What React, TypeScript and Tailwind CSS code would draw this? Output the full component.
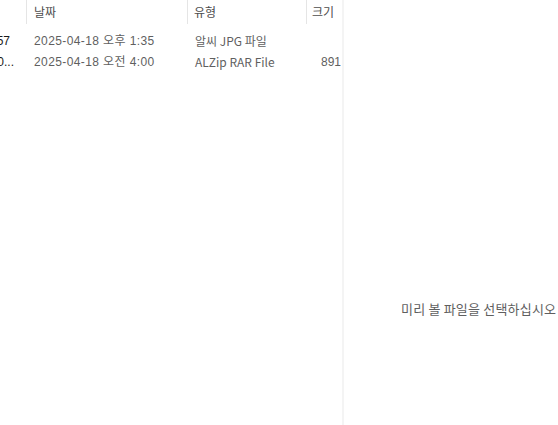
const rows = [
  { name: '57', namePad: 'pr-[17px]', date: '2025-04-18 오후 1:35', type: '알씨 JPG 파일', size: '' },
  { name: '0...', namePad: 'pr-[13px]', date: '2025-04-18 오전 4:00', type: 'ALZip RAR File', size: '891' },
]

const wide = { fontFamily: '"Liberation Sans", "Noto Sans CJK KR", sans-serif' }

export default function App() {
  return (
    <div
      className="w-[558px] h-[425px] bg-white flex overflow-hidden text-[12px]"
      style={{ fontFamily: '"Noto Sans CJK KR", "Noto Sans", sans-serif' }}
    >
      {/* File list */}
      <div className="w-[342px] shrink-0 flex flex-col">
        <div className="flex h-[24px] text-[#4d4d4d]">
          <div className="w-[27px] border-r border-[#e5e5e5]" />
          <div className="w-[161px] pl-[7px] pt-[3px] border-r border-[#e5e5e5]">날짜</div>
          <div className="w-[119px] pl-[6px] pt-[3px] border-r border-[#e5e5e5]">유형</div>
          <div className="flex-1 pl-[5px] pt-[3px]">크기</div>
        </div>
        <div className="pt-[6px]">
          {rows.map((r) => (
            <div key={r.date} className="flex h-[21px] items-center">
              <div
                className={`w-[27px] overflow-hidden flex justify-end text-[#1a1a1a] ${r.namePad}`}
                style={wide}
              >
                <span className="whitespace-nowrap">{r.name}</span>
              </div>
              <div className="w-[161px] pl-[7px] text-[#5f5f5f] whitespace-nowrap tracking-[0.4px]" style={wide}>
                {r.date}
              </div>
              <div className="w-[119px] pl-[7px] text-[#5f5f5f] whitespace-nowrap">{r.type}</div>
              <div className="flex-1 text-right pr-[1px] text-[#5f5f5f]" style={wide}>
                {r.size}
              </div>
            </div>
          ))}
        </div>
      </div>
      <div className="w-[2px] bg-[#f4f4f4]" />
      {/* Preview pane */}
      <div className="flex-1 pl-[57px] pt-[299px] text-[13px] tracking-[0.2px] text-[#5f5f5f] whitespace-nowrap">
        미리 볼 파일을 선택하십시오
      </div>
    </div>
  )
}
